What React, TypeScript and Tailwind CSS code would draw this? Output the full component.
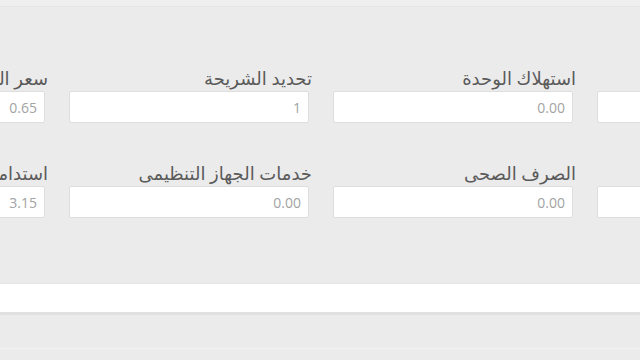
import React from "react";

interface Field {
  label: string;
  value: string;
}

const rows: Field[][] = [
  [
    { label: "رسوم الخدمة", value: "" },
    { label: "استهلاك الوحدة", value: "0.00" },
    { label: "تحديد الشريحة", value: "1" },
    { label: "سعر الوحدة", value: "0.65" },
  ],
  [
    { label: "رسوم العداد", value: "" },
    { label: "الصرف الصحى", value: "0.00" },
    { label: "خدمات الجهاز التنظيمى", value: "0.00" },
    { label: "استدامة الخدمة", value: "3.15" },
  ],
];

const FieldBox: React.FC<{ field: Field }> = ({ field }) => (
  <div className="flex flex-col">
    <label className="block h-[24px] text-[18px] leading-[24px] text-[#5a5a5a] whitespace-nowrap mr-[-3px]">
      {field.label}
    </label>
    <div className="mt-[1px] h-[32px] bg-white border border-[#dedede] rounded-[2px] pr-[7px] pl-3 flex items-center text-[14px] text-[#a3a3a3]">
      {field.value}
    </div>
  </div>
);

const App: React.FC = () => {
  return (
    <div
      className="w-[640px] h-[360px] overflow-hidden bg-[#ebebeb] relative"
      style={{ fontFamily: '"Open Sans", "DejaVu Sans", sans-serif' }}
    >
      <div className="h-[7px] bg-[#efefef] border-b border-[#e6e6e6]" />
      <div className="pt-[59px]">
        <div dir="rtl" className="w-[1032px] ml-[-195px] flex flex-col gap-y-[38px]">
          {rows.map((row, i) => (
            <div key={i} className="grid grid-cols-4 gap-x-6">
              {row.map((f) => (
                <FieldBox key={f.label} field={f} />
              ))}
            </div>
          ))}
        </div>
      </div>
      <div className="mt-[65px] h-[32px] bg-white border-t border-[#e4e4e4] border-b-[3px] border-b-[#e0e0e0] mx-[-2px]" />
      <div className="mt-[33px] h-[1px] bg-[#f3f3f3]" />
    </div>
  );
};

export default App;
